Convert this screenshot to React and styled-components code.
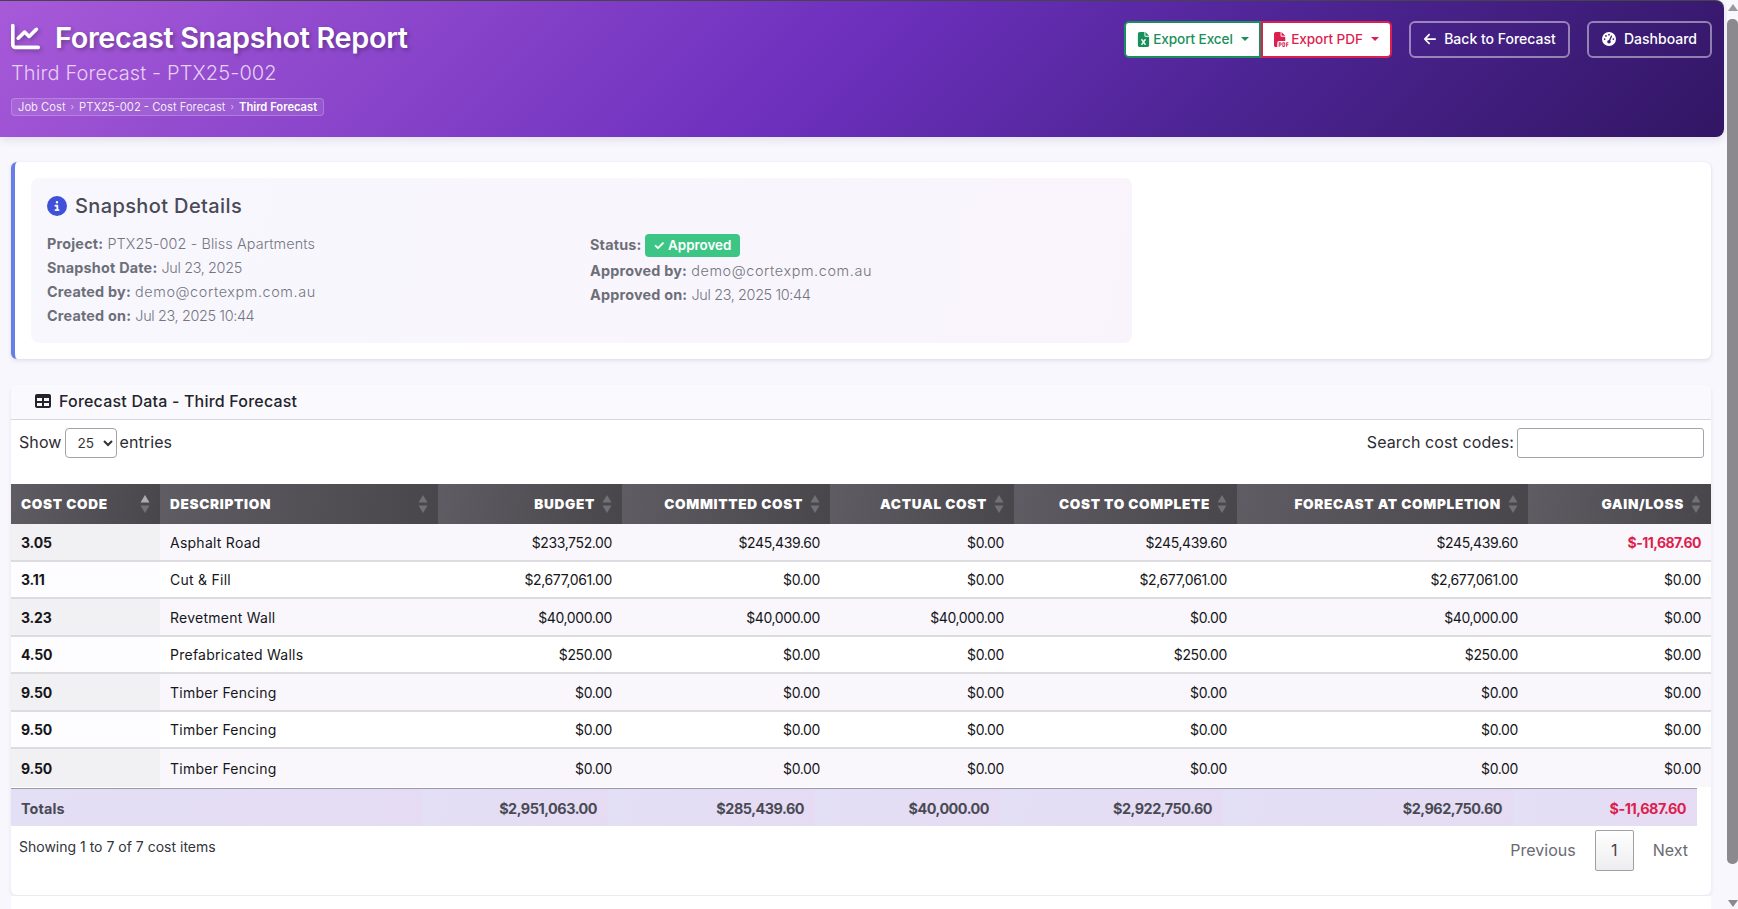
import React from "react";
import styled, { createGlobalStyle } from "styled-components";
import { FaChartLine, FaFileExcel, FaFilePdf, FaArrowLeft, FaGaugeHigh, FaCircleInfo, FaTable } from "react-icons/fa6";

const Global = createGlobalStyle`
  html, body { margin: 0; padding: 0; height: 909px; overflow: hidden; background: #f8f7fd; }
  * { box-sizing: border-box; }
  body { font-family: Inter, "Liberation Sans", sans-serif; }
`;

const Shell = styled.div`display: flex; height: 909px; overflow: hidden;`;
const Main = styled.main`flex: 1; min-width: 0; height: 909px; overflow: hidden; background: #f8f7fd;`;

const ScrollTrack = styled.aside`
  width: 11px; flex: none; display: flex; flex-direction: column; align-items: center;
  justify-content: space-between; background: #f8f7fd; padding: 4px 0 2px;
`;
const ThumbWrap = styled.div`flex: 1; width: 100%; padding: 8px 0 36px;`;
const Thumb = styled.div`height: 100%; background: #8b898d; border-radius: 5px;`;
const ArrowUp = styled.div`width: 0; height: 0; border-left: 5px solid transparent; border-right: 5px solid transparent; border-bottom: 7px solid #9a989c;`;
const ArrowDown = styled(ArrowUp)`border-bottom: 0; border-top: 7px solid #8b898d;`;

const Header = styled.header`
  height: 137px; margin-right: 3px; border-top: 1px solid #47434d; border-radius: 0 8px 8px 0;
  background: linear-gradient(135deg, #a75ad8 0%, #6d30bd 48%, #4c2492 72%, #321664 100%);
  padding: 20px 12px 0 11px; display: flex; justify-content: space-between; align-items: flex-start;
  box-shadow: 0 3px 8px rgba(60,50,90,.12);
`;
const HeadLeft = styled.div`display: flex; flex-direction: column; align-items: flex-start;`;
const Title = styled.h1`
  margin: 0; display: flex; align-items: center; gap: 15px; height: 34px;
  font-size: 28.8px; font-weight: 600; color: #fff; line-height: 34px; letter-spacing: -.33px;
  text-shadow: 2px 2px 4px rgba(0,0,0,.3);
  svg { width: 29px; height: 29px; margin-top: -3px; filter: drop-shadow(2px 2px 2px rgba(0,0,0,.25)); }
`;
const Sub = styled.div`margin-top: 6px; font-size: 20px; font-weight: 300; line-height: 24px; color: #e6cff5; letter-spacing: .12px;`;
const Crumbs = styled.nav`
  margin-top: 13px; height: 18px; display: flex; align-items: center; gap: 5px; padding: 0 6px;
  background: rgba(255,255,255,.1); border: 1px solid rgba(255,255,255,.2); border-radius: 4px;
  font-size: 11.2px; line-height: 16px; color: rgba(255,255,255,.88);
`;
const Sep = styled.span`font-size: 9px; color: rgba(255,255,255,.6);`;
const CrumbNow = styled.span`color: #fff; font-weight: 600;`;

const Actions = styled.div`display: flex; align-items: center; gap: 17px;`;
const Group = styled.div`display: flex;`;
const ExportBtn = styled.button`
  height: 37px; width: ${p => p.$w}px; display: flex; align-items: center; justify-content: center; gap: 2px;
  background: #fff; color: ${p => p.$c}; border: 2px solid ${p => p.$c}; letter-spacing: -.1px;
  border-radius: ${p => p.$r}; font: 500 13.6px Inter, sans-serif; padding: 0 0 2px;
  svg { font-size: 15px; margin-top: 2px; }
`;
const Caret = styled.i`
  width: 0; height: 0; margin-left: 6px; border-left: 4px solid transparent; border-right: 4px solid transparent;
  border-top: 4px solid currentColor;
`;
const GhostBtn = styled.button`
  height: 37px; width: ${p => p.$w}px; display: flex; align-items: center; justify-content: center; gap: ${p => p.$g}px;
  background: transparent; color: #fff; border: 2px solid rgba(255,255,255,.45); border-radius: 6px;
  font: 500 14px Inter, sans-serif; padding: 0 0 2px;
  svg { font-size: 14px; margin-top: 1px; }
`;

const Content = styled.div`padding: 25px 16px 0 11px;`;
const DetailsCard = styled.section`
  height: 197px; background: #fff; border-left: 4px solid #667eea; border-radius: 6px;
  box-shadow: 0 2px 4px rgba(40,40,80,.1), 0 0 1px rgba(40,40,80,.15); padding: 16px 0 0 16px;
`;
const DetailsBox = styled.div`
  width: 1101px; height: 165px; border-radius: 8px; padding: 16px;
  background: linear-gradient(100deg, #f8f7fe, #f9f4fc);
`;
const DetailsTitle = styled.h2`
  margin: 0 0 14px; display: flex; align-items: center; gap: 8px; height: 24px;
  font-size: 20px; font-weight: 500; color: #4a4a55; line-height: 24px; letter-spacing: .38px;
  svg { color: #3f51d8; font-size: 20px; }
`;
const DetailsCols = styled.div`display: grid; grid-template-columns: 543px 1fr;`;
const Line = styled.div`font-size: 14.4px; line-height: 24px; height: 24px; color: #74767f; font-weight: 300; letter-spacing: .1px;
  b { font-weight: 700; color: #6d6f78; letter-spacing: .2px; }`;
const Email = styled.span`letter-spacing: .6px;`;
const When = styled.span`letter-spacing: -.35px;`;
const BadgeLine = styled(Line)`height: 26px; display: flex; align-items: center; gap: 3px; margin-bottom: 1px;`;
const Badge = styled.span`
  height: 23px; width: 95px; display: flex; align-items: center; justify-content: center; border-radius: 4px;
  background: #3dc585; color: #fff; font-size: 13.4px; font-weight: 600; letter-spacing: 0;
`;

const DataCard = styled.section`
  margin-top: 26px; height: 510px; background: #fff; border-radius: 6px;
  box-shadow: 0 2px 4px rgba(40,40,80,.08);
`;
const DataHead = styled.div`
  height: 35px; display: flex; align-items: center; gap: 8px; padding: 0 0 2px 24px;
  background: #fafafe; border-bottom: 1px solid #d7d7dc; border-radius: 6px 6px 0 0;
  font-size: 16px; font-weight: 500; color: #24242c; letter-spacing: .2px;
  svg { font-size: 16px; }
`;
const Toolbar = styled.div`
  height: 64px; display: flex; justify-content: space-between; align-items: flex-start; padding: 8px 7px 0 8px;
  font-size: 16px; color: #2c2c34; font-weight: 400; letter-spacing: .1px;
`;
const ToolGroup = styled.label`display: flex; align-items: center; gap: ${p => p.$g}px; height: 30px; padding-bottom: 2px;`;
const Select = styled.select`
  width: 52px; height: 30px; margin-top: 2px; border: 1px solid #a3a3a8; border-radius: 4px; background: #fff;
  font: 400 13.6px Inter, sans-serif; color: #333; padding: 0 0 0 8px;
`;
const Search = styled.input`width: 187px; height: 30px; margin-top: 2px; border: 1px solid #a3a3a8; border-radius: 3px; background: #fff;`;

const Table = styled.table`
  table-layout: fixed; width: ${p => p.$w}px; border-collapse: separate; border-spacing: 0;
`;
const Col = styled.col`width: ${p => p.$w}px;`;
const Th = styled.th`
  position: relative; height: 40px; padding: 0 ${p => (p.$right ? 27 : 10)}px 0 10px;
  text-align: ${p => (p.$right ? "right" : "left")};
  background: linear-gradient(100deg, #5f5d63, #48464b);
  color: #fff; font-size: 13.6px; font-weight: 900; letter-spacing: .68px; text-transform: uppercase; white-space: nowrap;
`;
const Sort = styled.svg`position: absolute; right: 10px; top: 11px; width: 10px; height: 18px;`;
const Row = styled.tr`
  &:nth-child(odd) td { height: 38px; background: #f9f7fc; }
  &:nth-child(even) td { height: 37px; background: #fff; }
  &:nth-child(odd) td:first-child { background: #f1f0f2; }
  &:nth-child(even) td:first-child { background: #fdfcfe; }
  &:not(:last-child) td { border-bottom: 2px solid #dcdbdf; }
`;
const spacing = p => {
  if (p.$red) return "-.55px";
  if (p.$bold) return "-.15px";
  if (p.$right) return "-.38px";
  return ".25px";
};
const Td = styled.td`
  padding: 0 10px; font-size: 14px; color: ${p => (p.$red ? "#dc1f4f" : "#16161a")};
  font-weight: ${p => (p.$bold ? 700 : 400)}; text-align: ${p => (p.$right ? "right" : "left")};
  white-space: nowrap; letter-spacing: ${spacing};
`;
const TotalsWrap = styled.div`margin-top: 1px; width: 1686px; border-top: 1px solid #9b99ad;`;
const TotalCell = styled.td`
  height: 37px; padding: 1px 11px 0 10px; font-size: 14.4px; font-weight: 700;
  color: ${p => (p.$red ? "#dc1f4f" : "#4a4a55")}; text-align: ${p => (p.$right ? "right" : "left")};
  letter-spacing: ${p => (p.$right ? "-.48px" : ".1px")};
  background: linear-gradient(100deg, #e3dff5, #e5dcf3);
`;
const Footer = styled.div`display: flex; justify-content: space-between; align-items: flex-start; padding: 4px 23px 0 8px;`;
const Info = styled.div`margin-top: 6px; font-size: 14px; line-height: 22px; color: #33333b; font-weight: 400;`;
const Pager = styled.div`display: flex; align-items: center; font-size: 16px; color: #6a6a72; gap: 19px; font-weight: 400;`;
const PageLink = styled.span`padding-bottom: 2px;`;
const Page = styled.span`
  width: 39px; height: 41px; display: flex; align-items: center; justify-content: center; color: #444; padding-bottom: 2px;
  border: 1px solid #a0a0a4; border-radius: 2px; background: linear-gradient(#fff, #ededf0);
`;
const NextCard = styled.div`height: 20px; margin-top: 1px; background: #fff;`;

const SortIcon = ({ active }) => (
  <Sort viewBox="0 0 10 18">
    <path d="M5 0l4.5 7.5h-9z" fill={active ? "rgba(255,255,255,.55)" : "rgba(255,255,255,.22)"} />
    <path d="M5 18l4.5-7.5h-9z" fill="rgba(255,255,255,.22)" />
  </Sort>
);

const cols = [149, 278, 184, 208, 184, 223, 291, 183];
const heads = ["Cost Code", "Description", "Budget", "Committed Cost", "Actual Cost", "Cost to Complete", "Forecast at Completion", "Gain/Loss"];
const rows = [
  ["3.05", "Asphalt Road", "$233,752.00", "$245,439.60", "$0.00", "$245,439.60", "$245,439.60", "$-11,687.60"],
  ["3.11", "Cut & Fill", "$2,677,061.00", "$0.00", "$0.00", "$2,677,061.00", "$2,677,061.00", "$0.00"],
  ["3.23", "Revetment Wall", "$40,000.00", "$40,000.00", "$40,000.00", "$0.00", "$40,000.00", "$0.00"],
  ["4.50", "Prefabricated Walls", "$250.00", "$0.00", "$0.00", "$250.00", "$250.00", "$0.00"],
  ["9.50", "Timber Fencing", "$0.00", "$0.00", "$0.00", "$0.00", "$0.00", "$0.00"],
  ["9.50", "Timber Fencing", "$0.00", "$0.00", "$0.00", "$0.00", "$0.00", "$0.00"],
  ["9.50", "Timber Fencing", "$0.00", "$0.00", "$0.00", "$0.00", "$0.00", "$0.00"],
];
const totalCols = [411, 186, 207, 185, 223, 290, 184];
const totals = ["Totals", "$2,951,063.00", "$285,439.60", "$40,000.00", "$2,922,750.60", "$2,962,750.60", "$-11,687.60"];

export default function App() {
  return (
    <Shell>
      <Global />
      <Main>
        <Header>
          <HeadLeft>
            <Title><FaChartLine />Forecast Snapshot Report</Title>
            <Sub>Third Forecast - PTX25-002</Sub>
            <Crumbs>
              <span>Job Cost</span><Sep>›</Sep>
              <span>PTX25-002 - Cost Forecast</span><Sep>›</Sep>
              <CrumbNow>Third Forecast</CrumbNow>
            </Crumbs>
          </HeadLeft>
          <Actions>
            <Group>
              <ExportBtn $w={137} $c="#198f5d" $r="5px 0 0 5px"><FaFileExcel />Export Excel<Caret /></ExportBtn>
              <ExportBtn $w={131} $c="#dc1f4f" $r="0 5px 5px 0"><FaFilePdf />Export PDF<Caret /></ExportBtn>
            </Group>
            <GhostBtn $w={161} $g={7}><FaArrowLeft />Back to Forecast</GhostBtn>
            <GhostBtn $w={125} $g={8}><FaGaugeHigh />Dashboard</GhostBtn>
          </Actions>
        </Header>
        <Content>
          <DetailsCard>
            <DetailsBox>
              <DetailsTitle><FaCircleInfo />Snapshot Details</DetailsTitle>
              <DetailsCols>
                <div>
                  <Line><b>Project:</b> PTX25-002 - Bliss Apartments</Line>
                  <Line><b>Snapshot Date:</b> <When>Jul 23, 2025</When></Line>
                  <Line><b>Created by:</b> <Email>demo@cortexpm.com.au</Email></Line>
                  <Line><b>Created on:</b> <When>Jul 23, 2025 10:44</When></Line>
                </div>
                <div>
                  <BadgeLine><b>Status:</b> <Badge>✓ Approved</Badge></BadgeLine>
                  <Line><b>Approved by:</b> <Email>demo@cortexpm.com.au</Email></Line>
                  <Line><b>Approved on:</b> <When>Jul 23, 2025 10:44</When></Line>
                </div>
              </DetailsCols>
            </DetailsBox>
          </DetailsCard>
          <DataCard>
            <DataHead><FaTable />Forecast Data - Third Forecast</DataHead>
            <Toolbar>
              <ToolGroup $g={3}>Show <Select defaultValue="25"><option>10</option><option>25</option><option>50</option></Select> entries</ToolGroup>
              <ToolGroup $g={3}>Search cost codes: <Search /></ToolGroup>
            </Toolbar>
            <Table $w={1700}>
              <colgroup>{cols.map((w, i) => <Col key={i} $w={w} />)}</colgroup>
              <thead>
                <tr>
                  {heads.map((h, i) => (
                    <Th key={h} $right={i > 1}>{h}<SortIcon active={i === 0} /></Th>
                  ))}
                </tr>
              </thead>
              <tbody>
                {rows.map((r, ri) => (
                  <Row key={ri}>
                    {r.map((c, i) => (
                      <Td key={i} $right={i > 1} $bold={i === 0 || c.startsWith("$-")} $red={c.startsWith("$-")}>{c}</Td>
                    ))}
                  </Row>
                ))}
              </tbody>
            </Table>
            <TotalsWrap>
              <Table $w={1686}>
                <colgroup>{totalCols.map((w, i) => <Col key={i} $w={w} />)}</colgroup>
                <tbody>
                  <tr>
                    {totals.map((c, i) => (
                      <TotalCell key={i} $right={i > 0} $red={c.startsWith("$-")}>{c}</TotalCell>
                    ))}
                  </tr>
                </tbody>
              </Table>
            </TotalsWrap>
            <Footer>
              <Info>Showing 1 to 7 of 7 cost items</Info>
              <Pager><PageLink>Previous</PageLink><Page>1</Page><PageLink>Next</PageLink></Pager>
            </Footer>
          </DataCard>
          <NextCard />
        </Content>
      </Main>
      <ScrollTrack>
        <ArrowUp />
        <ThumbWrap><Thumb /></ThumbWrap>
        <ArrowDown />
      </ScrollTrack>
    </Shell>
  );
}
